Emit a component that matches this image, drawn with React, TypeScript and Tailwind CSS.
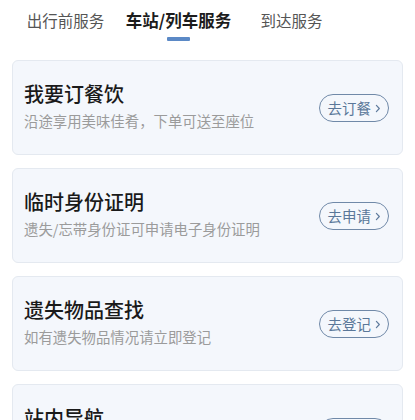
import React, { useState } from 'react';

const tabs = ['出行前服务', '车站/列车服务', '到达服务'];

const services = [
  { title: '我要订餐饮', desc: '沿途享用美味佳肴，下单可送至座位', action: '去订餐' },
  { title: '临时身份证明', desc: '遗失/忘带身份证可申请电子身份证明', action: '去申请' },
  { title: '遗失物品查找', desc: '如有遗失物品情况请立即登记', action: '去登记' },
  { title: '站内导航', desc: '车站内设施位置一键查找', action: '去查看' },
];

function Chevron() {
  return (
    <svg width="6" height="9" viewBox="0 0 6 9" className="ml-[4px] mt-[1px]">
      <path d="M1.4 1.4 L4.3 4.5 L1.4 7.6" fill="none" stroke="#5f7b9d" strokeWidth="1.2" strokeLinecap="round" strokeLinejoin="round" />
    </svg>
  );
}

export default function App() {
  const [active, setActive] = useState(1);

  return (
    <div
      className="w-[415px] h-[420px] overflow-hidden bg-white"
      style={{ fontFamily: '"Noto Sans CJK SC", "Noto Sans", sans-serif' }}
    >
      {/* Tabs */}
      <div className="flex pl-[9px] pt-[7px] h-[50px]">
        {tabs.map((t, i) => (
          <button
            key={t}
            type="button"
            onClick={() => setActive(i)}
            className="w-[113px] flex flex-col items-center"
          >
            <span
              className={
                i === active
                  ? 'text-[16.5px] leading-[26px] font-bold text-[#1c1c1c]'
                  : 'text-[15.5px] leading-[26px] text-[#555555]'
              }
            >
              {t}
            </span>
            <span
              className={`mt-[4px] h-[4px] w-[23px] rounded-[1px] ${i === active ? 'bg-[#5b89c6]' : 'bg-transparent'}`}
            />
          </button>
        ))}
      </div>

      {/* Service cards */}
      <div className="flex flex-col gap-[13px] px-[12px] pt-[10px]">
        {services.map(s => (
          <div
            key={s.title}
            className="h-[95px] shrink-0 flex items-center justify-between rounded-[6px] border border-[#e4e9f0] bg-[#f4f7fc] pl-[11px] pr-[13px]"
          >
            <div className="flex flex-col pb-[4px]">
              <div className="text-[20px] leading-[28px] font-medium text-[#1a1a1a]">{s.title}</div>
              <div className="mt-[3px] text-[14.4px] leading-[20px] text-[#9b9b9b]">{s.desc}</div>
            </div>
            <button
              type="button"
              className="flex items-center h-[28px] pl-[8px] pr-[7px] rounded-full border border-[#7089a8] text-[14.5px] text-[#5a7799] bg-transparent"
            >
              {s.action}
              <Chevron />
            </button>
          </div>
        ))}
      </div>
    </div>
  );
}
